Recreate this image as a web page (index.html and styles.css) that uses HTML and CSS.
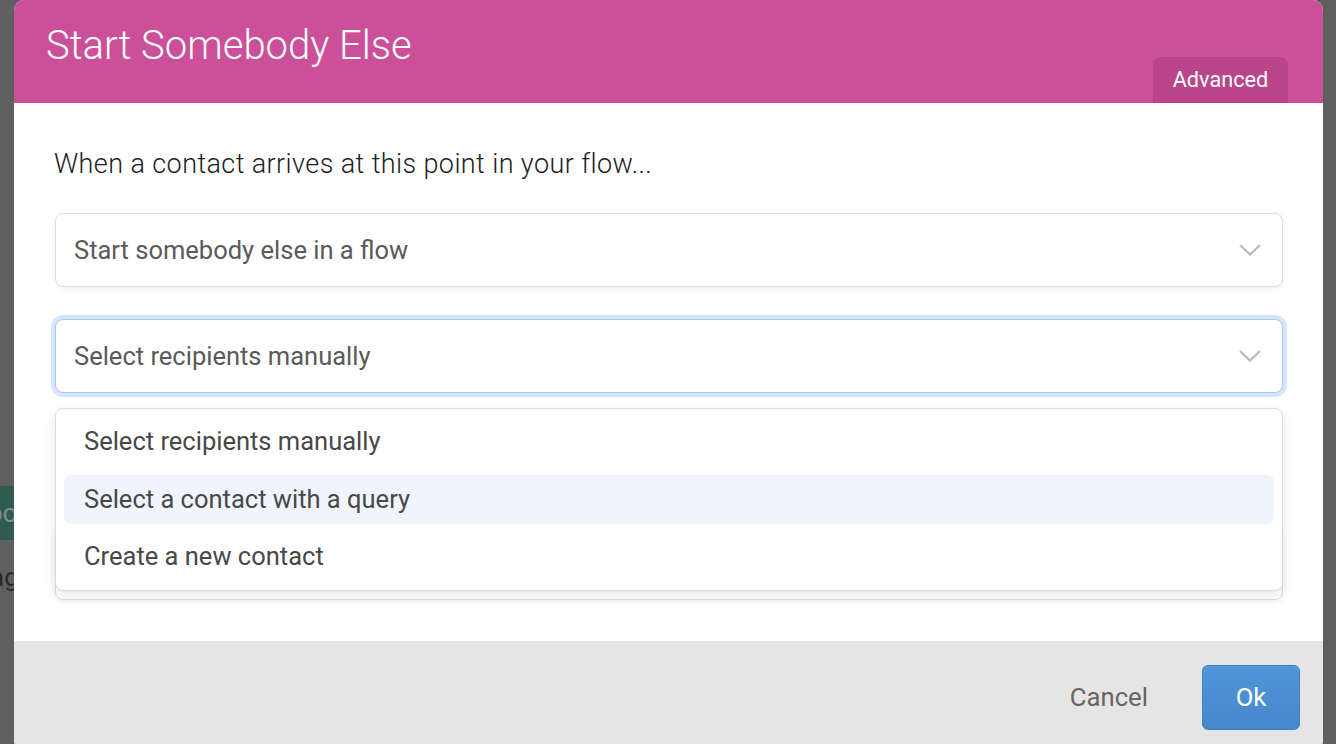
FILE: index.html
```html
<!DOCTYPE html>
<html>
<head>
<meta charset="utf-8">
<link rel="stylesheet" href="styles.css">
</head>
<body>
<div class="page">
  <div class="page-btn">bo</div>
  <div class="page-text">ag</div>
</div>
<div class="overlay">
  <div class="dialog">
    <div class="header">
      <h1 class="title">Start Somebody Else</h1>
      <div class="tab">Advanced</div>
    </div>
    <div class="content">
      <p class="intro">When a contact arrives at this point in your flow...</p>
      <div class="select">
        <span>Start somebody else in a flow</span>
        <svg class="chev" width="26" height="16" viewBox="0 0 26 16"><path d="M3 3 L13 12.5 L23 3" fill="none" stroke="#bdbdbd" stroke-width="2.4"/></svg>
      </div>
      <div class="select focused">
        <span>Select recipients manually</span>
        <svg class="chev" width="26" height="16" viewBox="0 0 26 16"><path d="M3 3 L13 12.5 L23 3" fill="none" stroke="#bdbdbd" stroke-width="2.4"/></svg>
      </div>
      <div class="stack">
        <div class="select hidden-select"></div>
        <div class="menu">
          <div class="option">Select recipients manually</div>
          <div class="option active">Select a contact with a query</div>
          <div class="option">Create a new contact</div>
        </div>
      </div>
    </div>
    <div class="footer">
      <span class="cancel">Cancel</span>
      <span class="ok">Ok</span>
    </div>
  </div>
</div>
</body>
</html>
```
FILE: styles.css
```css
* { box-sizing: border-box; }
html, body { margin: 0; padding: 0; }
body {
  width: 1336px;
  height: 744px;
  overflow: hidden;
  background: #5f5f5f;
  font-family: Roboto, "Liberation Sans", sans-serif;
  position: relative;
}
.page {
  position: absolute;
  inset: 0;
  background: repeating-linear-gradient(to bottom, #5f5f5f 0, #5f5f5f 41px, #58606a 41px, #58606a 42px);
}
.page-btn {
  position: absolute;
  left: -12px;
  top: 486px;
  width: 40px;
  height: 54px;
  background: #2f5a4f;
  color: #7f8f89;
  font-size: 26px;
  line-height: 54px;
}
.page-text {
  position: absolute;
  left: -10px;
  top: 562px;
  color: #2a2a2a;
  font-size: 26px;
}
.overlay {
  position: absolute;
  inset: 0;
  padding-left: 14px;
}
.dialog {
  width: 1309px;
  height: 750px;
  border-radius: 10px;
  overflow: hidden;
  display: flex;
  flex-direction: column;
  background: #fff;
}
.header {
  height: 103px;
  background: #cc4f99;
  display: flex;
  justify-content: space-between;
  align-items: flex-end;
  padding: 0 35px 0 32px;
  flex-shrink: 0;
}
.title {
  margin: 0;
  align-self: flex-start;
  padding-top: 22px;
  font-size: 40px;
  font-weight: 300;
  color: #fff;
  line-height: 48px;
}
.tab {
  width: 135px;
  height: 46px;
  background: #ba458a;
  border-radius: 7px 7px 0 0;
  color: #fff;
  font-size: 21.7px;
  text-align: center;
  line-height: 46px;
}
.content {
  flex: 1;
  padding: 0 40px 0 41px;
  display: flex;
  flex-direction: column;
}
.intro {
  margin: 43px 0 0 -1px;
  font-size: 27px;
  font-weight: 300;
  letter-spacing: 0.4px;
  color: #1e1e1e;
  line-height: 36px;
}
.select {
  margin-top: 31px;
  height: 74px;
  border: 1px solid #dcdcdc;
  border-radius: 8px;
  background: #fff;
  box-shadow: 0 2px 6px rgba(0,0,0,0.06);
  display: flex;
  align-items: center;
  justify-content: space-between;
  padding: 0 19px 0 18px;
  font-size: 25.5px;
  color: #5a5a5a;
}
.select + .select { margin-top: 32px; }
.focused {
  border-color: #a9c6f6;
  box-shadow: 0 0 0 4px #d7e5fb;
}
.stack {
  position: relative;
  margin-top: 15px;
}
.hidden-select {
  margin-top: 118px;
}
.menu {
  position: absolute;
  left: 0;
  right: 0;
  top: 0;
  height: 183px;
  background: #fff;
  border: 1px solid #dcdcdc;
  border-radius: 8px;
  box-shadow: 0 4px 12px rgba(0,0,0,0.10);
  padding: 8px 8px;
  display: flex;
  flex-direction: column;
  gap: 8.5px;
}
.option {
  height: 49px;
  border-radius: 7px;
  padding-left: 20px;
  font-size: 25.5px;
  color: #484848;
  line-height: 49px;
}
.active { background: #eff4fd; }
.footer {
  margin-top: auto;
  height: 109px;
  background: #e5e5e5;
  display: flex;
  align-items: flex-start;
  justify-content: flex-end;
  padding: 24px 23px 0 0;
  flex-shrink: 0;
}
.cancel {
  font-size: 25.7px;
  color: #666;
  line-height: 65px;
  margin-right: 54px;
}
.ok {
  width: 98px;
  height: 65px;
  background: linear-gradient(#5096d8, #4687cc);
  border: 1px solid #3f82c8;
  border-radius: 6px;
  color: #fff;
  font-size: 25.7px;
  text-align: center;
  line-height: 63px;
}
```
